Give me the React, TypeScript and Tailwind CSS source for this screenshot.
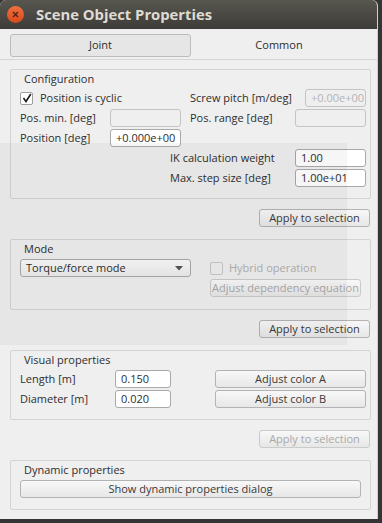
import React from 'react';

const font = { fontFamily: '"Open Sans", "Noto Sans", sans-serif' };

function Field({ value, width, disabled }: { value?: string; width: string; disabled?: boolean }) {
  return (
    <div
      className={`${width} shrink-0 h-[18px] rounded-[3px] border flex items-center px-[5px] text-[11px] ${
        disabled ? 'border-[#c4c4c4] bg-[#efefef] text-[#b4b4b4]' : 'border-[#a9a9a9] bg-white text-[#2e2e2e]'
      }`}
    >
      {value}
    </div>
  );
}

function Button({ label, width, disabled }: { label: string; width: string; disabled?: boolean }) {
  return (
    <div
      className={`${width} shrink-0 h-[18px] rounded-[3px] border flex items-center justify-center whitespace-nowrap text-[11px] bg-gradient-to-b from-[#f8f8f8] to-[#e7e7e7] ${
        disabled ? 'border-[#cbcbcb] text-[#a9a9a9]' : 'border-[#b3b3b3] text-[#3a3a3a]'
      }`}
    >
      {label}
    </div>
  );
}

function Group({ title, children }: { title: string; children: React.ReactNode }) {
  return (
    <div className="border border-[#d3d3d3] rounded-[2px] pl-[9px] pr-[5px]">
      <div className="h-[18px] flex items-center pl-[4px] text-[11px] text-[#2e2e2e]">{title}</div>
      {children}
    </div>
  );
}

function ApplyButton({ disabled }: { disabled?: boolean }) {
  return (
    <div className="flex justify-end pr-[1px]">
      <Button label="Apply to selection" width="w-[111px]" disabled={disabled} />
    </div>
  );
}

export default function App() {
  return (
    <div className="relative w-[382px] h-[523px] bg-[#353535] overflow-hidden" style={font}>
      <div className="w-[378px] h-[519px] bg-[#efefef] rounded-t-[6px] flex flex-col overflow-hidden border-r border-[#cfcfcf]">
        {/* title bar */}
        <div className="h-[29px] bg-gradient-to-b from-[#57564f] to-[#3d3c38] flex items-center pl-[7px] gap-[12px] shrink-0">
          <div className="w-[17px] h-[17px] rounded-full bg-gradient-to-b from-[#f0703f] to-[#d9481b] flex items-center justify-center">
            <svg width="7" height="7" viewBox="0 0 7 7">
              <path d="M1 1 L6 6 M6 1 L1 6" stroke="#4a2418" strokeWidth="1.3" />
            </svg>
          </div>
          <span className="text-[14.8px] font-bold text-[#dfdbd2]">Scene Object Properties</span>
        </div>

        {/* tabs */}
        <div className="mt-[5px] h-[23px] flex px-[10px] text-[11px] text-[#2e2e2e]">
          <div className="w-[181px] rounded-[3px] border border-[#bcbcbc] bg-[#e6e6e6] flex items-center justify-center">
            Joint
          </div>
          <div className="flex-1 flex items-center justify-center">Common</div>
        </div>

        <div className="mt-[2px] border-t border-[#d6d6d6] pt-[9px] pl-[10px] pr-[6px] flex flex-col">
          {/* Configuration */}
          <Group title="Configuration">
            <div className="h-[20px] flex items-center text-[11px] text-[#2e2e2e]">
              <div className="w-[13px] h-[13px] shrink-0 border border-[#9f9f9f] bg-white rounded-[2px] flex items-center justify-center">
                <svg width="10" height="10" viewBox="0 0 10 10">
                  <path d="M1.5 5 L4 8.5 L8.8 1" stroke="#1c1c1c" strokeWidth="1.6" fill="none" />
                </svg>
              </div>
              <span className="ml-[7px] w-[150px] shrink-0">Position is cyclic</span>
              <span className="w-[115px] shrink-0">Screw pitch [m/deg]</span>
              <Field value="+0.00e+00" width="w-[61px]" disabled />
            </div>
            <div className="h-[20px] flex items-center text-[11px] text-[#2e2e2e]">
              <span className="w-[90px] shrink-0">Pos. min. [deg]</span>
              <Field width="w-[71px]" disabled />
              <span className="ml-[9px] w-[105px] shrink-0">Pos. range [deg]</span>
              <Field width="w-[71px]" disabled />
            </div>
            <div className="h-[20px] flex items-center text-[11px] text-[#2e2e2e]">
              <span className="w-[90px] shrink-0">Position [deg]</span>
              <Field value="+0.000e+00" width="w-[71px]" />
            </div>
            <div className="h-[20px] flex items-center text-[11px] text-[#2e2e2e]">
              <span className="ml-[150px] w-[125px] shrink-0">IK calculation weight</span>
              <Field value="1.00" width="w-[71px]" />
            </div>
            <div className="h-[20px] flex items-center text-[11px] text-[#2e2e2e]">
              <span className="ml-[150px] w-[125px] shrink-0">Max. step size [deg]</span>
              <Field value="1.00e+01" width="w-[71px]" />
            </div>
            <div className="h-[10px]" />
          </Group>

          <div className="h-[10px]" />
          <ApplyButton />
          <div className="h-[12px]" />

          {/* Mode */}
          <Group title="Mode">
            <div className="h-[20px] flex items-center text-[11px]">
              <div className="w-[171px] shrink-0 h-[18px] rounded-[3px] border border-[#a9a9a9] bg-gradient-to-b from-[#fafafa] to-[#ececec] flex items-center pl-[5px] pr-[7px] text-[#2e2e2e]">
                <span className="flex-1">Torque/force mode</span>
                <svg width="8" height="5" viewBox="0 0 8 5">
                  <path d="M0 0 H8 L4 4.5 Z" fill="#555" />
                </svg>
              </div>
              <div className="ml-[19px] w-[13px] h-[13px] shrink-0 border border-[#c6c6c6] rounded-[2px] bg-[#efefef]" />
              <span className="ml-[6px] text-[#b0b0b0]">Hybrid operation</span>
            </div>
            <div className="h-[20px] flex items-center">
              <div className="ml-[190px]">
                <Button label="Adjust dependency equation" width="w-[151px]" disabled />
              </div>
            </div>
            <div className="h-[11px]" />
          </Group>

          <div className="h-[10px]" />
          <ApplyButton />
          <div className="h-[12px]" />

          {/* Visual properties */}
          <Group title="Visual properties">
            <div className="h-[20px] flex items-center text-[11px] text-[#2e2e2e]">
              <span className="w-[95px] shrink-0">Length [m]</span>
              <Field value="0.150" width="w-[56px]" />
              <div className="ml-[44px]">
                <Button label="Adjust color A" width="w-[151px]" />
              </div>
            </div>
            <div className="h-[20px] flex items-center text-[11px] text-[#2e2e2e]">
              <span className="w-[95px] shrink-0">Diameter [m]</span>
              <Field value="0.020" width="w-[56px]" />
              <div className="ml-[44px]">
                <Button label="Adjust color B" width="w-[151px]" />
              </div>
            </div>
            <div className="h-[10px]" />
          </Group>

          <div className="h-[10px]" />
          <ApplyButton disabled />
          <div className="h-[12px]" />

          {/* Dynamic properties */}
          <Group title="Dynamic properties">
            <div className="h-[20px] flex items-center">
              <Button label="Show dynamic properties dialog" width="w-[341px]" />
            </div>
            <div className="h-[10px]" />
          </Group>
        </div>
      </div>

      {/* faint shading left over in the capture */}
      <div className="absolute left-0 top-[143px] w-[347px] h-[202px] bg-black/[0.035] pointer-events-none" />
    </div>
  );
}
